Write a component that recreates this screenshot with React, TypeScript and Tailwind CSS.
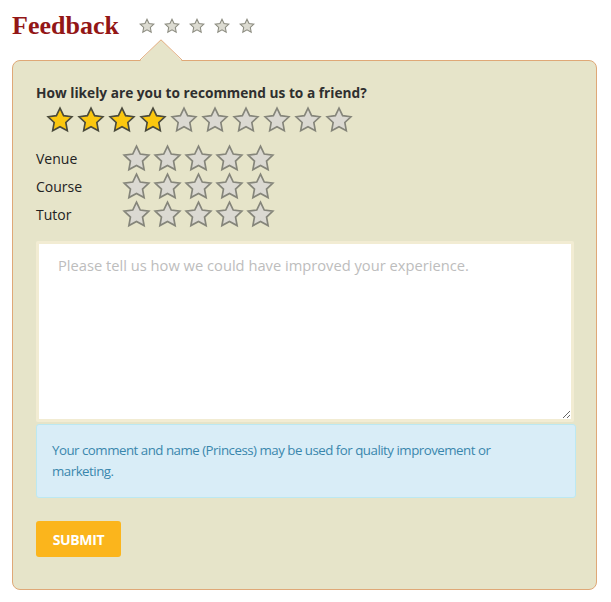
import React from "react";

const STAR_POINTS =
  "12,1.8 15.1,8.3 22.2,9.2 17,14.1 18.3,21.2 12,17.8 5.7,21.2 7,14.1 1.8,9.2 8.9,8.3";

const Star = ({ size, on }: { size: number; on?: boolean }) => (
  <svg width={size} height={size} viewBox="0 0 24 24" className="shrink-0">
    <polygon
      points={STAR_POINTS}
      fill={on ? "#fbc70f" : "#dbd9d2"}
      stroke={on ? "#4a4a3c" : "#85857a"}
      strokeWidth={1.4}
      strokeLinejoin="miter"
    />
  </svg>
);

const StarRow = ({ count, filled = 0, size, gap }: { count: number; filled?: number; size: number; gap: string }) => (
  <div className={`flex items-center ${gap}`}>
    {Array.from({ length: count }).map((_, i) => (
      <Star key={i} size={size} on={i < filled} />
    ))}
  </div>
);

const App = () => {
  return (
    <div className="w-[611px] h-[602px] bg-white font-['Open_Sans',sans-serif] text-[#333]">
      {/* heading */}
      <div className="flex items-center pl-3 pt-[12px] h-[40px]">
        <h1 className="font-['Liberation_Serif',serif] font-bold text-[26px] leading-none text-[#931616]">
          Feedback
        </h1>
        <div className="ml-[20px] flex gap-[9px]">
          {[0, 1, 2, 3, 4].map((i) => (
            <svg key={i} width={16} height={16} viewBox="0 0 24 24">
              <polygon points={STAR_POINTS} fill="#dcdbd1" stroke="#8c8c80" strokeWidth={1.6} />
            </svg>
          ))}
        </div>
      </div>

      {/* panel */}
      <div className="relative mx-3 mt-[20px] w-[585px] h-[530px] rounded-[8px] border border-[#dfa877] bg-[#e6e4c9] px-[23px] pt-[22px]">
        <svg
          width={46}
          height={23}
          viewBox="0 0 46 23"
          className="absolute left-[125px] top-[-22px]"
        >
          <polygon points="1,23 23,1 45,23" fill="#e6e4c9" />
          <polyline points="1,22 23,0.8 45,22" fill="none" stroke="#dfa877" strokeWidth={1} />
        </svg>

        <p className="text-[13.7px] font-bold leading-[20px] text-[#2f2f2f]">
          How likely are you to recommend us to a friend?
        </p>

        <div className="mt-[3px] ml-[10px] h-[28px] flex items-center">
          <StarRow count={10} filled={4} size={28} gap="gap-[3px]" />
        </div>

        <div className="mt-[10px] flex flex-col">
          {["Venue", "Course", "Tutor"].map((label) => (
            <div key={label} className="flex items-center h-[28px]">
              <span className="w-[86px] text-[14px] text-[#222]">{label}</span>
              <StarRow count={5} size={29} gap="gap-[2px]" />
            </div>
          ))}
        </div>

        <textarea
          placeholder="Please tell us how we could have improved your experience."
          className="mt-[13px] block w-[538px] h-[181px] resize-y rounded-[2px] border-[3px] border-[#f2ecd3] bg-white px-[19px] py-[10px] text-[14.7px] leading-[22px] text-[#555] placeholder:text-[#bdbdbd] outline-none"
        />

        <div className="mt-[2px] w-[540px] h-[74px] rounded-[3px] border border-[#bce8f1] bg-[#d9edf7] pl-[15px] pr-[80px] pt-[15px] text-[13.3px] leading-[21px] tracking-[-0.5px] text-[#3a87ad]">
          Your comment and name (Princess) may be used for quality improvement or marketing.
        </div>

        <button className="mt-[23px] h-[36px] w-[85px] rounded-[3px] bg-[#fbb51c] text-[14px] font-bold text-white tracking-tight">
          SUBMIT
        </button>
      </div>
    </div>
  );
};

export default App;
